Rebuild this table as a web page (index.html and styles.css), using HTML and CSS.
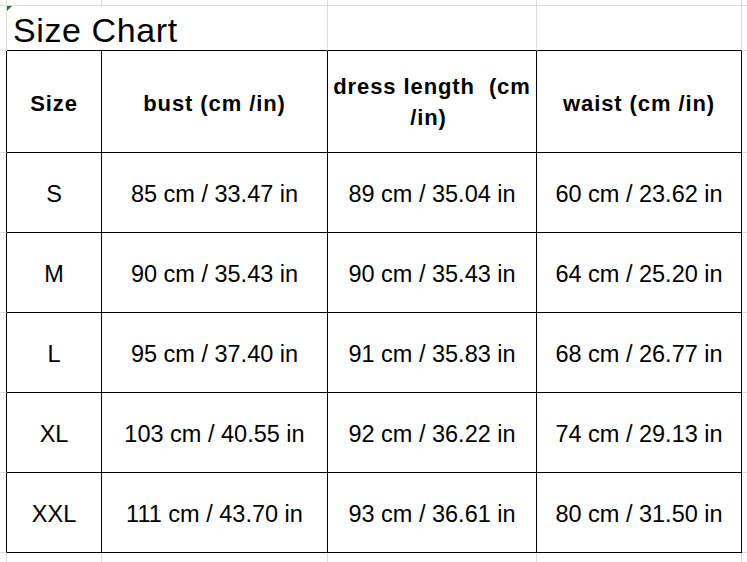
FILE: index.html
```html
<!DOCTYPE html>
<html lang="en">
<head>
<meta charset="utf-8">
<title>Size Chart</title>
<link rel="stylesheet" href="styles.css">
</head>
<body>
<div class="sheet">
  <!-- row 0 -->
  <div class="c"></div><div class="c"></div><div class="c"></div><div class="c"></div><div class="c"></div><div class="c end"></div>
  <!-- title row -->
  <div class="c"></div>
  <div class="c title-cell"><span class="flag"></span><span class="title">Size Chart</span></div>
  <div class="c tb"></div><div class="c tb"></div><div class="c end"></div>
  <!-- header -->
  <div class="c edge"></div>
  <div class="c t hd">Size</div>
  <div class="c t hd">bust (cm /in)</div>
  <div class="c t hd wrap"><span>dress length&nbsp; (cm<br>/in)&nbsp;</span></div>
  <div class="c t hd">waist (cm /in)</div>
  <div class="c end"></div>
  <!-- S -->
  <div class="c edge"></div>
  <div class="c t td">S</div><div class="c t td">85 cm / 33.47 in</div><div class="c t td">89 cm / 35.04 in</div><div class="c t td">60 cm / 23.62 in</div>
  <div class="c end"></div>
  <!-- M -->
  <div class="c edge"></div>
  <div class="c t td">M</div><div class="c t td">90 cm / 35.43 in</div><div class="c t td">90 cm / 35.43 in</div><div class="c t td">64 cm / 25.20 in</div>
  <div class="c end"></div>
  <!-- L -->
  <div class="c edge"></div>
  <div class="c t td">L</div><div class="c t td">95 cm / 37.40 in</div><div class="c t td">91 cm / 35.83 in</div><div class="c t td">68 cm / 26.77 in</div>
  <div class="c end"></div>
  <!-- XL -->
  <div class="c edge"></div>
  <div class="c t td">XL</div><div class="c t td">103 cm / 40.55 in</div><div class="c t td">92 cm / 36.22 in</div><div class="c t td">74 cm / 29.13 in</div>
  <div class="c end"></div>
  <!-- XXL -->
  <div class="c edge"></div>
  <div class="c t td">XXL</div><div class="c t td">111 cm / 43.70 in</div><div class="c t td">93 cm / 36.61 in</div><div class="c t td">80 cm / 31.50 in</div>
  <div class="c end"></div>
  <!-- bottom row -->
  <div class="c nb"></div><div class="c nb"></div><div class="c nb"></div><div class="c nb"></div><div class="c nb"></div><div class="c nb end"></div>
</div>
</body>
</html>
```

FILE: styles.css
```css
html, body {
  margin: 0;
  padding: 0;
  background: #ffffff;
}

.sheet {
  display: grid;
  grid-template-columns: 7px 95px 226px 209px 205px 5px;
  grid-template-rows: 6px 45px 102px repeat(5, 80px) 9px;
  width: 747px;
  height: 562px;
  overflow: hidden;
  font-family: "Liberation Sans", Arial, sans-serif;
  color: #000;
}

.c {
  box-sizing: border-box;
  border-right: 1px solid #dcdcdc;
  border-bottom: 1px solid #dcdcdc;
  min-width: 0;
}

.c.end {
  border-right: none;
}

.c.nb {
  border-bottom: none;
}

.title-cell {
  grid-column: 2 / 4;
  position: relative;
  display: flex;
  align-items: flex-end;
  padding-left: 6px;
  border-bottom: 1px solid #000;
}

.tb {
  border-bottom: 1px solid #000;
}

.flag {
  position: absolute;
  left: 0;
  top: 0;
  width: 0;
  height: 0;
  border-top: 5px solid #1f7a35;
  border-right: 5px solid transparent;
}

.title {
  font-size: 34px;
  letter-spacing: 0.6px;
  line-height: normal;
  white-space: nowrap;
}

.edge {
  border-right: 1px solid #000;
}

.t {
  border-right: 1px solid #000;
  border-bottom: 1px solid #000;
  display: flex;
  align-items: center;
  justify-content: center;
  text-align: center;
  white-space: nowrap;
}

.hd {
  font-weight: bold;
  font-size: 22px;
  letter-spacing: 0.9px;
  padding-top: 4px;
}

.wrap {
  line-height: 31px;
  padding-top: 1px;
}

.td {
  font-size: 23.5px;
  padding-top: 4px;
}
```
